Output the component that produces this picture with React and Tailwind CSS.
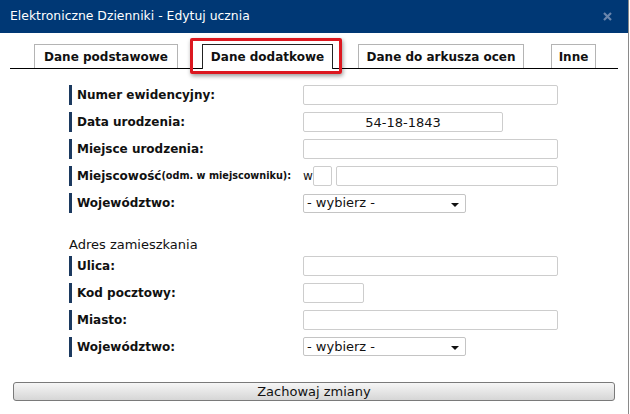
import React from 'react';

const Label = ({ children }) => (
  <div className="flex items-center h-[20px] border-l-[3px] border-[#1c3a60] pl-[5px] font-bold text-[12px] text-[#111] whitespace-nowrap">
    {children}
  </div>
);

const Input = ({ className = 'w-[255px]', value }) => (
  <input
    readOnly
    value={value || ''}
    className={`h-[20px] border border-[#cdcdcd] rounded-[2px] bg-white text-center text-[13px] text-[#111] outline-none ${className}`}
  />
);

const Select = () => (
  <div className="relative flex items-center h-[19px] w-[163px] border border-[#c4c4c4] rounded-[2px] bg-white pl-[3px] text-[13px] text-[#111]">
    - wybierz -
    <span className="absolute right-[6px] top-[8px] w-0 h-0 border-l-[4px] border-r-[4px] border-t-[4px] border-l-transparent border-r-transparent border-t-[#111]" />
  </div>
);

const Row = ({ label, children }) => (
  <div className="grid grid-cols-[234px_auto] items-center">
    <Label>{label}</Label>
    <div className="flex items-center">{children}</div>
  </div>
);

export default function App() {
  return (
    <div className="w-[630px] h-[414px] bg-white overflow-hidden font-['DejaVu_Sans',sans-serif]">
      <div className="relative w-[629px] h-full border-r border-[#8a8a8a]">
        <div className="h-[33px] bg-[#003875] flex items-center justify-between pl-[10px] pr-[16px] text-white text-[12.4px]">
          <span>Elektroniczne Dzienniki - Edytuj ucznia</span>
          <svg width="9" height="9" viewBox="0 0 9 9">
            <path d="M1 1L8 8M8 1L1 8" stroke="#6a86ad" strokeWidth="2.2" />
          </svg>
        </div>

        <div className="px-[10px] pt-[11px]">
          <div className="flex items-end h-[25px] border-b border-black text-[12px] font-bold text-[#111]">
            <div className="ml-[24px] w-[144px] h-[24px] border border-b-0 border-[#b4b4b4] flex items-center justify-center">
              Dane podstawowe
            </div>
            <div className="relative z-10 -mb-px ml-[24px] w-[131px] h-[25px] border border-b-0 border-[#222] bg-white flex items-center justify-center">
              Dane dodatkowe
            </div>
            <div className="ml-[25px] w-[166px] h-[24px] border border-b-0 border-[#b4b4b4] flex items-center justify-center">
              Dane do arkusza ocen
            </div>
            <div className="ml-[27px] w-[45px] h-[24px] border border-b-0 border-[#b4b4b4] flex items-center justify-center">
              Inne
            </div>
          </div>
        </div>

        <div className="absolute left-[190px] top-[38px] w-[152px] h-[36px] border-[3px] border-[#dc1820] rounded-[2px] shadow-[1px_2px_4px_rgba(0,0,0,0.4)] z-20" />

        <div className="pl-[69px] pt-[16px] flex flex-col gap-[7px]">
          <Row label="Numer ewidencyjny:">
            <Input />
          </Row>
          <Row label="Data urodzenia:">
            <Input className="w-[200px]" value="54-18-1843" />
          </Row>
          <Row label="Miejsce urodzenia:">
            <Input />
          </Row>
          <Row
            label={
              <>
                Miejscowość<span className="text-[9.7px]">(odm. w miejscowniku):</span>
              </>
            }
          >
            <span className="text-[12px] text-[#111] w-[10px]">w</span>
            <Input className="w-[19px]" />
            <Input className="ml-[4px] w-[222px]" />
          </Row>
          <Row label="Województwo:">
            <Select />
          </Row>

          <div className="mt-[15px] -mb-[6px] text-[13px] text-[#111]">Adres zamieszkania</div>

          <Row label="Ulica:">
            <Input />
          </Row>
          <Row label="Kod pocztowy:">
            <Input className="w-[61px]" />
          </Row>
          <Row label="Miasto:">
            <Input />
          </Row>
          <Row label="Województwo:">
            <Select />
          </Row>
        </div>

        <div className="px-[13px] pt-[22px]">
          <button className="w-[602px] h-[19px] border border-[#7a7a7a] rounded-[3px] bg-gradient-to-b from-[#f6f6f6] to-[#d6d6d6] text-[13px] text-[#111] leading-none">
            Zachowaj zmiany
          </button>
        </div>
      </div>
    </div>
  );
}
